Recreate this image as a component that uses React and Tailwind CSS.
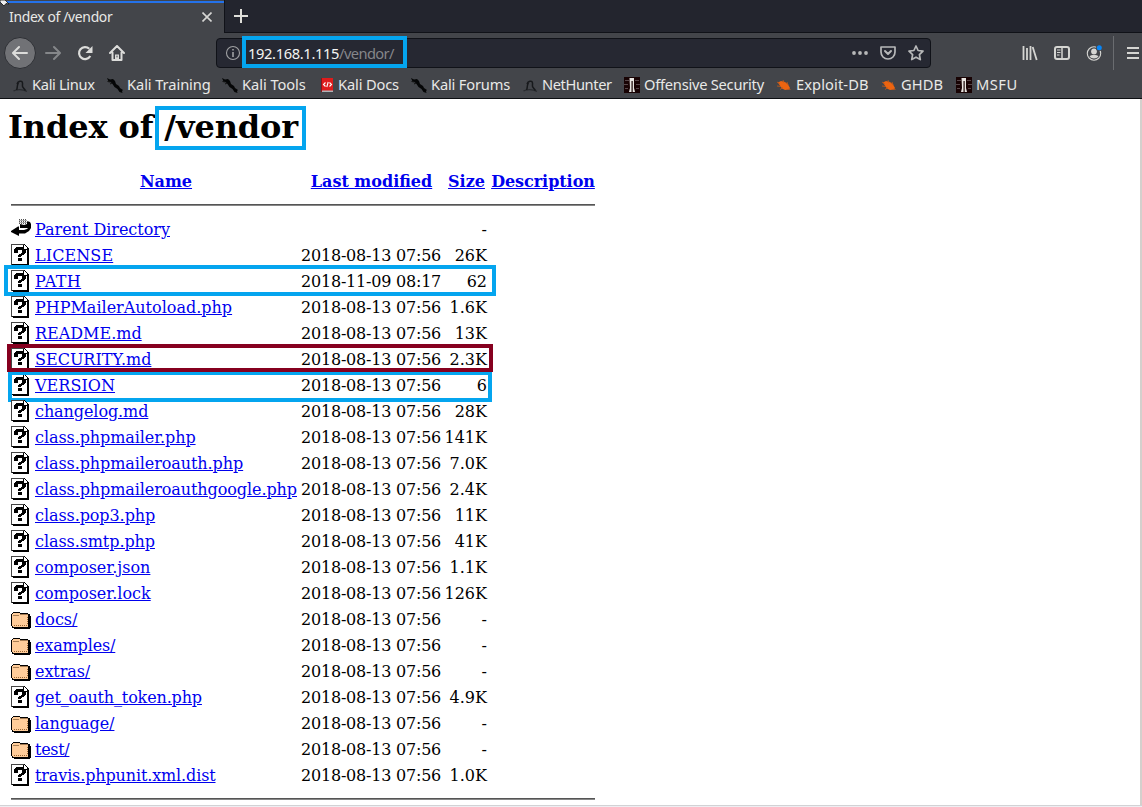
import React from "react";

const rows = [
  ["back", "Parent Directory", "", "-"],
  ["file", "LICENSE", "2018-08-13 07:56", "26K"],
  ["file", "PATH", "2018-11-09 08:17", "62"],
  ["file", "PHPMailerAutoload.php", "2018-08-13 07:56", "1.6K"],
  ["file", "README.md", "2018-08-13 07:56", "13K"],
  ["file", "SECURITY.md", "2018-08-13 07:56", "2.3K"],
  ["file", "VERSION", "2018-08-13 07:56", "6"],
  ["file", "changelog.md", "2018-08-13 07:56", "28K"],
  ["file", "class.phpmailer.php", "2018-08-13 07:56", "141K"],
  ["file", "class.phpmaileroauth.php", "2018-08-13 07:56", "7.0K"],
  ["file", "class.phpmaileroauthgoogle.php", "2018-08-13 07:56", "2.4K"],
  ["file", "class.pop3.php", "2018-08-13 07:56", "11K"],
  ["file", "class.smtp.php", "2018-08-13 07:56", "41K"],
  ["file", "composer.json", "2018-08-13 07:56", "1.1K"],
  ["file", "composer.lock", "2018-08-13 07:56", "126K"],
  ["dir", "docs/", "2018-08-13 07:56", "-"],
  ["dir", "examples/", "2018-08-13 07:56", "-"],
  ["dir", "extras/", "2018-08-13 07:56", "-"],
  ["file", "get_oauth_token.php", "2018-08-13 07:56", "4.9K"],
  ["dir", "language/", "2018-08-13 07:56", "-"],
  ["dir", "test/", "2018-08-13 07:56", "-"],
  ["file", "travis.phpunit.xml.dist", "2018-08-13 07:56", "1.0K"],
];

const highlights = {
  PATH: "-left-[7px] -top-[3px] w-[492px] h-[31px] border-[#04a5ef]",
  "SECURITY.md": "-left-[4px] -top-[2px] w-[486px] h-[28px] border-[#86001f] z-10",
  VERSION: "-left-[3px] -top-px w-[484px] h-[31px] border-[#04a5ef]",
};

const nameTracking = {
  "Parent Directory": "tracking-[-0.02px]",
  LICENSE: "tracking-[0.1px]",
  PATH: "tracking-[0.4px]",
  "PHPMailerAutoload.php": "tracking-normal",
  "README.md": "tracking-normal",
  "SECURITY.md": "tracking-normal",
  VERSION: "tracking-[0.05px]",
  "composer.json": "tracking-normal",
  "composer.lock": "tracking-normal",
  "docs/": "tracking-normal",
  "get_oauth_token.php": "tracking-[-0.15px]",
  "travis.phpunit.xml.dist": "tracking-[-0.13px]",
  "examples/": "tracking-[-0.15px]",
  "test/": "tracking-[-0.3px]",
};

const bookmarks = [
  ["kali", "Kali Linux", "w-[94px] tracking-[-0.33px]", "w-[19px]"],
  ["dragon", "Kali Training", "w-[115px] tracking-[-0.08px]", "w-5"],
  ["dragon", "Kali Tools", "w-[98px] tracking-[-0.05px]", "w-5"],
  ["docs", "Kali Docs", "w-[91px] tracking-[-0.15px]", "w-[18px]"],
  ["dragon", "Kali Forums", "w-[112px] tracking-[-0.18px]", "w-5"],
  ["kali", "NetHunter", "w-[101px] tracking-[-0.4px]", "w-[19px]"],
  ["offsec", "Offensive Security", "w-[152px] tracking-[-0.24px]", "w-5"],
  ["bug", "Exploit-DB", "w-[105px] tracking-[0.1px]", "w-5"],
  ["bug", "GHDB", "w-[75px] tracking-[0.1px]", "w-5"],
  ["offsec", "MSFU", "w-[70px] tracking-[0.5px]", "w-5"],
];

function FileIcon() {
  return (
    <svg className="h-[22px] w-5" viewBox="0 0 20 22" shapeRendering="crispEdges">
      <path d="M0 0h14v1h1v1h1v1h1v1h1v18H2v-1H0z" fill="#000" />
      <path d="M0 0h13v1H1v20H0z" fill="#444" />
      <path d="M1 1h11v5h4v14H1z" fill="#fff" />
      <path d="M13 1h1v1h1v1h1v2h-3z" fill="#fff" />
      <path d="M5 3h7v1h1v1h1v1h1v3h-1v1h-1v1h-2v1h-1v1H7v-2h1v-1h2V9h1V6H7v3H3V5h1V4h1zM7 14h4v3H7z" fill="#000" />
    </svg>
  );
}

function DirIcon() {
  return (
    <svg className="h-[22px] w-5" viewBox="0 0 20 22" shapeRendering="crispEdges">
      <path d="M1 5h1V4h7v1h8v1h2v2h1v12h-1v1H3v-1H1v-2H0V6h1z" fill="#000" />
      <path d="M1 6h1V5h7v1h8v1H9v1H1z" fill="#fc9" />
      <path d="M1 8h8V7h8v12H2v-1H1z" fill="#fc9" />
      <path d="M2 7.5h6M9 6.5h8" stroke="#a67c52" fill="none" />
      <path d="M3 17.5h13M16.5 9v8" stroke="#963" strokeDasharray="1 1" fill="none" />
    </svg>
  );
}

function BackIcon() {
  return (
    <svg className="h-[22px] w-5" viewBox="0 0 20 22">
      <path d="M9 6l4 1 3-1V3l3 1 1 2v4l-2 3-4 2.500H8V18l-8-4v-1l7-4.500h1V12h5l3-1 1-1H9z" fill="#000" />
      <path d="M8 1.500h7M8 3.500h9M8 5.500h8M8.500 2.500h7M8.500 4.500h8" stroke="#555" strokeDasharray="1 1" />
    </svg>
  );
}

const fileIcons = { file: FileIcon, dir: DirIcon, back: BackIcon };

function BookmarkIcon({ kind }) {
  if (kind === "kali")
    return (
      <svg className="size-4" viewBox="0 0 16 16">
        <path d="M.5 14c3-2 9-2 13.500.3" stroke="#292b2f" strokeWidth="1.300" fill="none" />
        <path d="M4 7c1-3 5-4 5.500-1 .3 3-1 3 1 5l2 2.500M5.500 6C3.500 8 5 10 3.500 13" stroke="#17191c" strokeWidth="1.500" fill="none" />
      </svg>
    );
  if (kind === "dragon")
    return (
      <svg className="size-4" viewBox="0 0 16 16">
        <path d="M0 1l3 1.500L6 2l2 2 1 3 3 2 1 2 3 2-1 1 .5 2-3-1-2-3-3-2-2-3-2-2-2-.5z" fill="#050607" />
        <path d="M.5 4.500l3 .5M3 7l2-1" stroke="#111" />
      </svg>
    );
  if (kind === "docs")
    return (
      <svg className="size-4" viewBox="0 0 16 16">
        <path d="M1 1h12v14H1z" fill="#de1c1c" />
        <path d="M1 13.500h12V15H1z" fill="#aeb4b8" />
        <path d="M1 1h1v14H1z" fill="#8e1118" />
        <path d="M5.500 5.500l-2 2 2 2M9.500 5.500l2 2-2 2M8.200 5l-1.400 5" stroke="#fff" strokeWidth="1.100" fill="none" />
      </svg>
    );
  if (kind === "offsec")
    return (
      <svg className="size-4" viewBox="0 0 16 16">
        <path d="M0 0h16v16H0z" fill="#180304" />
        <path d="M1 3.500h4M11 3.500h4M0 7.500h4M12 7.500h4M1 11.500h3M12 11.500h3" stroke="#58474a" strokeWidth="1.200" />
        <path d="M5.500 1h4.500v10l1 4H8.700V4H7.500v11H5l1-4z" fill="#e9e6e2" />
      </svg>
    );
  return (
    <svg className="size-4" viewBox="0 0 16 16">
      <path d="M2 5.500l3-1.500 4 1 3 2.500 2 3.500-1 1.500-4 .5-3-1.500L3.500 8z" fill="#ed6410" />
      <path d="M1 5l3 2M1 9l4 .5M4 12.500l3-2M7 3l1 3M11 5l1 3M12 12l2.500.5" stroke="#c85a16" strokeWidth=".8" />
    </svg>
  );
}

function NavButtons() {
  return (
    <div className="flex items-center pl-1 text-[#dcdcda]">
      <div className="flex size-8 items-center justify-center rounded-full border border-[#2e3035] bg-[#717276]">
        <svg className="size-4" viewBox="0 0 16 16" fill="none" stroke="currentColor" strokeWidth="2" strokeLinecap="round" strokeLinejoin="round">
          <path d="M15 8H1.500M7 2L1 8l6 6" />
        </svg>
      </div>
      <svg className="ml-[9px] size-4 text-[#85878a]" viewBox="0 0 16 16" fill="none" stroke="currentColor" strokeWidth="2" strokeLinecap="round" strokeLinejoin="round">
        <path d="M1 8h13.500M9 2l6 6-6 6" />
      </svg>
      <svg className="ml-4 size-4" viewBox="0 0 16 16" fill="none" stroke="currentColor" strokeWidth="2.200">
        <path d="M13.300 11A6 6 0 1 1 12.300 3.800" />
        <path d="M15.500 1v7H8.500z" fill="currentColor" stroke="none" />
      </svg>
      <svg className="ml-4 size-4" viewBox="0 0 16 16" fill="none" stroke="currentColor" strokeWidth="2" strokeLinejoin="round" strokeLinecap="round">
        <path d="M1 8l7-7 7 7M3.500 7.500V15h9V7.500" />
        <path d="M6 15v-5.500h4V15z" fill="currentColor" stroke="none" />
        <path d="M8 11v1" stroke="#43454a" strokeWidth="1" />
      </svg>
    </div>
  );
}

function ToolbarIcons() {
  return (
    <div className="ml-auto flex items-center pr-[3px] text-[#d5d5d2]">
      <svg className="size-4" viewBox="0 0 16 16" stroke="currentColor" strokeWidth="1.800" fill="none">
        <path d="M1.500 1v14M5 3v12M8.500 1v14M10.700 2l4 13" />
      </svg>
      <svg className="ml-4 size-4" viewBox="0 0 16 16" stroke="currentColor" strokeWidth="2" fill="none">
        <rect x="1" y="2" width="14" height="12" rx="2" />
        <path d="M8 2v12" strokeWidth="1.500" />
        <path d="M3 5h3.500M3 7.500h3.500M3 10h2.500" strokeWidth="1" />
      </svg>
      <svg className="ml-4 size-4" viewBox="0 0 16 16" fill="none" stroke="currentColor">
        <circle cx="8" cy="8.500" r="6.700" strokeWidth="1.100" />
        <circle cx="8" cy="6.500" r="2.900" fill="currentColor" stroke="none" />
        <path d="M3.500 11.200c1.500-1.700 7.500-1.700 9 0-2 3-7 3-9 0z" fill="currentColor" stroke="none" />
        <circle cx="13.300" cy="2.700" r="3.300" fill="#43454a" stroke="none" />
        <circle cx="13.300" cy="2.700" r="2.500" fill="#0785f7" stroke="none" />
      </svg>
      <div className="ml-[11px] h-[34px] w-px bg-[#6a6c70]" />
      <svg className="ml-[13px] h-4 w-3" viewBox="0 0 12 16" stroke="currentColor" strokeWidth="2">
        <path d="M0 3h12M0 8h12M0 13h12" />
      </svg>
    </div>
  );
}

function Browser() {
  return (
    <header className="h-[99px] border-b border-[#0d0f13] bg-[#43454a] font-['Noto_Sans',sans-serif] text-[14.67px] text-[#e9e9e7]">
      <div className="flex h-[33px] bg-[#23252e]">
        <div className="relative flex w-[225px] items-center border-r border-[#101218] bg-[#43454a] pl-[9px] text-[13.900px] tracking-[-0.32px]">
          <div className="absolute left-0 top-px h-0.5 w-full bg-[#2472ea]" />
          <svg className="absolute left-0 top-0 h-1.5 w-3" viewBox="0 0 12 6">
            <path d="M0 0h5l4 4-3-.5L4 6 0 2z" fill="#eee" stroke="#111" strokeWidth=".8" />
          </svg>
          <span className="pt-0.5">Index of /vendor</span>
          <svg className="absolute left-[202px] top-3 size-2.5" viewBox="0 0 10 10" stroke="#d6d6d4" strokeWidth="1.600">
            <path d="M.5.5l9 9M9.500.5l-9 9" />
          </svg>
        </div>
        <div className="flex-1 border-b border-[#101218] pl-[9px] pt-[9px]">
          <svg className="size-3.5" viewBox="0 0 14 14" stroke="#deded9" strokeWidth="2">
            <path d="M7 0v14M0 7h14" />
          </svg>
        </div>
      </div>
      <div className="flex h-10 items-center">
        <NavButtons />
        <div className="relative ml-[91px] flex h-[30px] w-[715px] items-center rounded border border-[#101218] bg-[#262832] pl-2">
          <svg className="size-4" viewBox="0 0 16 16" fill="none" stroke="#a0a1a3">
            <circle cx="8" cy="8" r="6.500" strokeWidth="1.100" />
            <path d="M8 7v5M8 4v1.600" strokeWidth="1.600" />
          </svg>
          <span className="ml-[7px] text-[14.67px] tracking-[-0.35px] text-[#f4f4f3]">
            192.168.1.115<span className="tracking-[-0.6px] text-[#85868a]">/vendor/</span>
          </span>
          <div className="absolute -top-[3px] left-[25px] h-8 w-[165px] border-4 border-[#04a5ef]" />
          <div className="ml-auto mr-1.5 flex items-center gap-3 text-[#b7b8b9]">
            <svg className="size-4" viewBox="0 0 16 16" fill="currentColor">
              <circle cx="2" cy="8" r="1.900" /><circle cx="8" cy="8" r="1.900" /><circle cx="14" cy="8" r="1.900" />
            </svg>
            <svg className="size-4" viewBox="0 0 16 16" fill="none" stroke="currentColor" strokeWidth="2" strokeLinecap="round" strokeLinejoin="round">
              <path d="M1 2h14v5c0 4-3 7-7 7s-7-3-7-7z" strokeWidth="1.700" /><path d="M5 6l3 3 3-3" />
            </svg>
            <svg className="size-4" viewBox="0 0 16 16" fill="none" stroke="currentColor" strokeWidth="1.700" strokeLinejoin="round">
              <path d="M8 1l2.100 4.500 4.900.7-3.600 3.400.9 5L8 12.200l-4.300 2.400.9-5L1 6.200l4.900-.7z" />
            </svg>
          </div>
        </div>
        <ToolbarIcons />
      </div>
      <nav className="flex h-[23px] items-center pl-[13px]">
        {bookmarks.map(([kind, label, width, iconWidth]) => (
          <div key={label} className={`flex shrink-0 items-center whitespace-nowrap ${width}`}>
            <span className={`shrink-0 pt-px ${iconWidth}`}><BookmarkIcon kind={kind} /></span>
            <span className="-mt-0.5">{label}</span>
          </div>
        ))}
      </nav>
    </header>
  );
}

function Link({ children }) {
  return <a className="text-[#0000ee] underline">{children}</a>;
}

const columns = "grid grid-cols-[24px_262px_4px_140px_4px_42px_4px_104px]";

export default function App() {
  return (
    <div className="flex h-[807px] w-[1142px] flex-col overflow-hidden bg-white">
      <Browser />
      <main className="h-[706px] border-r-2 border-[#d4d0cd] pt-[7px] font-['DejaVu_Serif',serif] text-base text-black">
        <div className="flex h-[44px] pl-2">
          <h1 className="relative whitespace-pre text-[32px] font-bold leading-[42px] tracking-[-0.12px]">
            Index of /vendor
            <span className="absolute left-[147px] top-0 h-11 w-[151px] border-4 border-[#04a5ef]" />
          </h1>
        </div>
        <div className="ml-[11px] w-[584px]">
          <div className={`${columns} mt-[18px] h-[26px] items-center pt-0.5 text-center font-bold`}>
            <span className="col-start-2"><Link>Name</Link></span>
            <span className="col-start-4 pl-px"><Link>Last modified</Link></span>
            <span className="col-start-6 -mr-1 -ml-1 whitespace-nowrap pl-px"><Link>Size</Link></span>
            <span className="col-start-8 whitespace-nowrap tracking-[-0.05px]"><Link>Description</Link></span>
          </div>
          <div className="mt-2.5 h-0.5 border-b border-t border-b-[#888] border-t-[#555]" />
          <div className="mt-[10px]">
            {rows.map(([icon, name, date, size]) => {
              const Icon = fileIcons[icon];
              return (
                <div key={name} className={`${columns} relative h-[26px] items-center leading-[24px]`}>
                  <Icon />
                  <span className={`whitespace-nowrap pt-0.5 ${nameTracking[name] || "tracking-[-0.08px]"}`}><Link>{name}</Link></span>
                  <span className="col-start-4 whitespace-nowrap pt-0.5 tracking-[-0.21px]">{date}</span>
                  <span className="col-start-6 flex justify-end whitespace-nowrap pt-0.5">{size}</span>
                  {highlights[name] && <div className={`absolute border-4 ${highlights[name]}`} />}
                </div>
              );
            })}
          </div>
          <div className="mt-[10px] h-0.5 border-b border-t border-b-[#888] border-t-[#555]" />
        </div>
      </main>
      <footer className="h-0.5 border-t border-[#d2d2d5] bg-[#eeeef2]" />
    </div>
  );
}
